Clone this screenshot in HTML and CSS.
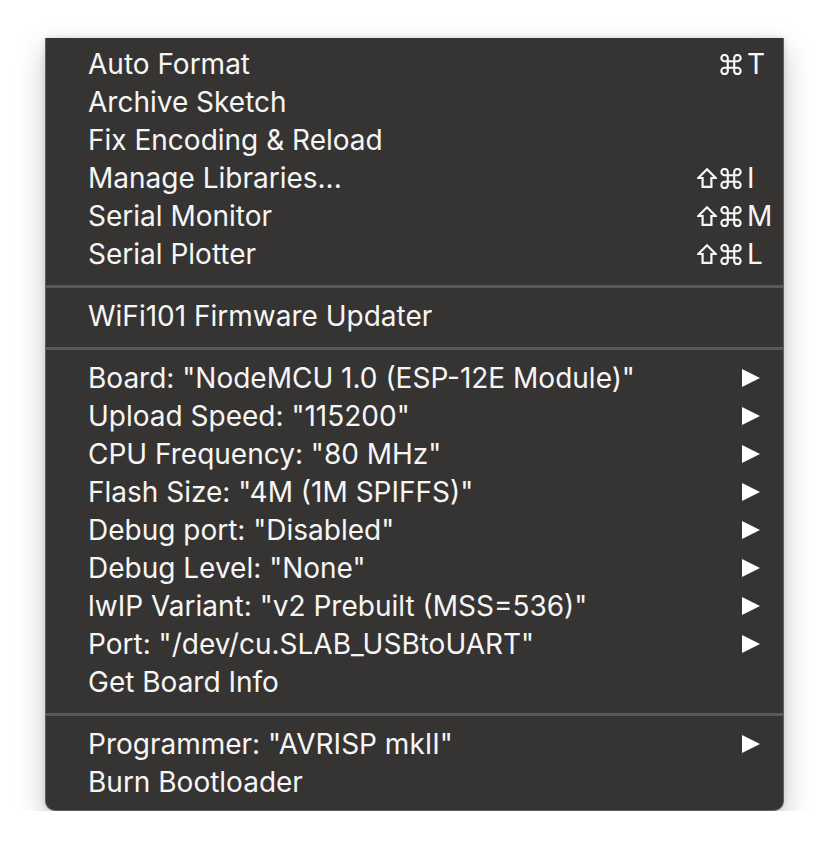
FILE: index.html
```html
<!DOCTYPE html>
<html>
<head>
<meta charset="utf-8">
<link rel="stylesheet" href="styles.css">
</head>
<body>
<div class="menu">
  <div class="row"><span class="label">Auto Format</span><span class="mods"><svg class="cmd" viewBox="2.2 2.2 19.6 19.6"><path d="M18 3a3 3 0 0 0-3 3v12a3 3 0 0 0 3 3 3 3 0 0 0 3-3 3 3 0 0 0-3-3H6a3 3 0 0 0-3 3 3 3 0 0 0 3 3 3 3 0 0 0 3-3V6a3 3 0 0 0-3-3 3 3 0 0 0-3 3 3 3 0 0 0 3 3h12a3 3 0 0 0 3-3 3 3 0 0 0-3-3z"/></svg></span><span class="key">T</span></div>
  <div class="row"><span class="label">Archive Sketch</span></div>
  <div class="row"><span class="label">Fix Encoding &amp; Reload</span></div>
  <div class="row"><span class="label">Manage Libraries...</span><span class="mods"><svg class="shift" viewBox="0 0 20 20"><polygon points="10,1.3 18.7,10 14.4,10 14.4,18.9 5.6,18.9 5.6,10 1.3,10"/></svg><svg class="cmd" viewBox="2.2 2.2 19.6 19.6"><path d="M18 3a3 3 0 0 0-3 3v12a3 3 0 0 0 3 3 3 3 0 0 0 3-3 3 3 0 0 0-3-3H6a3 3 0 0 0-3 3 3 3 0 0 0 3 3 3 3 0 0 0 3-3V6a3 3 0 0 0-3-3 3 3 0 0 0-3 3 3 3 0 0 0 3 3h12a3 3 0 0 0 3-3 3 3 0 0 0-3-3z"/></svg></span><span class="key">I</span></div>
  <div class="row"><span class="label">Serial Monitor</span><span class="mods"><svg class="shift" viewBox="0 0 20 20"><polygon points="10,1.3 18.7,10 14.4,10 14.4,18.9 5.6,18.9 5.6,10 1.3,10"/></svg><svg class="cmd" viewBox="2.2 2.2 19.6 19.6"><path d="M18 3a3 3 0 0 0-3 3v12a3 3 0 0 0 3 3 3 3 0 0 0 3-3 3 3 0 0 0-3-3H6a3 3 0 0 0-3 3 3 3 0 0 0 3 3 3 3 0 0 0 3-3V6a3 3 0 0 0-3-3 3 3 0 0 0-3 3 3 3 0 0 0 3 3h12a3 3 0 0 0 3-3 3 3 0 0 0-3-3z"/></svg></span><span class="key">M</span></div>
  <div class="row"><span class="label">Serial Plotter</span><span class="mods"><svg class="shift" viewBox="0 0 20 20"><polygon points="10,1.3 18.7,10 14.4,10 14.4,18.9 5.6,18.9 5.6,10 1.3,10"/></svg><svg class="cmd" viewBox="2.2 2.2 19.6 19.6"><path d="M18 3a3 3 0 0 0-3 3v12a3 3 0 0 0 3 3 3 3 0 0 0 3-3 3 3 0 0 0-3-3H6a3 3 0 0 0-3 3 3 3 0 0 0 3 3 3 3 0 0 0 3-3V6a3 3 0 0 0-3-3 3 3 0 0 0-3 3 3 3 0 0 0 3 3h12a3 3 0 0 0 3-3 3 3 0 0 0-3-3z"/></svg></span><span class="key">L</span></div>
  <div class="sep"></div>
  <div class="row"><span class="label">WiFi101 Firmware Updater</span></div>
  <div class="sep"></div>
  <div class="row"><span class="label">Board: "NodeMCU 1.0 (ESP-12E Module)"</span><span class="arrow"></span></div>
  <div class="row"><span class="label">Upload Speed: "115200"</span><span class="arrow"></span></div>
  <div class="row"><span class="label">CPU Frequency: "80 MHz"</span><span class="arrow"></span></div>
  <div class="row"><span class="label">Flash Size: "4M (1M SPIFFS)"</span><span class="arrow"></span></div>
  <div class="row"><span class="label">Debug port: "Disabled"</span><span class="arrow"></span></div>
  <div class="row"><span class="label">Debug Level: "None"</span><span class="arrow"></span></div>
  <div class="row"><span class="label">lwIP Variant: "v2 Prebuilt (MSS=536)"</span><span class="arrow"></span></div>
  <div class="row"><span class="label">Port: "/dev/cu.SLAB_USBtoUART"</span><span class="arrow"></span></div>
  <div class="row"><span class="label">Get Board Info</span></div>
  <div class="sep"></div>
  <div class="row"><span class="label">Programmer: "AVRISP mkII"</span><span class="arrow"></span></div>
  <div class="row"><span class="label">Burn Bootloader</span></div>
</div>
</body>
</html>
```
FILE: styles.css
```css
html, body {
  margin: 0;
  padding: 0;
  background: #ffffff;
}
.menu {
  margin: 38px 0 0 45px;
  width: 737px;
  background: #363432;
  border: 1px solid #62615f;
  border-top: none;
  border-radius: 0 0 10px 10px;
  box-shadow: 0 12px 30px rgba(0, 0, 0, 0.22), 0 0 6px rgba(0, 0, 0, 0.12);
  padding: 7px 0 9px 0;
  font-family: "Inter", "DejaVu Sans", sans-serif;
  font-size: 28px;
  color: #f6f6f6;
}
.row {
  display: grid;
  grid-template-columns: 1fr 70px 28px;
  height: 38px;
  line-height: 38px;
  padding: 0 8px 0 42px;
  white-space: nowrap;
}
.label {
  grid-column: 1;
}
.mods {
  grid-column: 2;
  justify-self: end;
  padding-right: 5px;
  display: flex;
  align-items: center;
  gap: 3px;
}
.shift {
  width: 20px;
  height: 20px;
  fill: none;
  stroke: #f6f6f6;
  stroke-width: 2.2;
  stroke-linejoin: miter;
}
.cmd {
  width: 22px;
  height: 21px;
  fill: none;
  stroke: #f6f6f6;
  stroke-width: 2;
}
.key {
  grid-column: 3;
}
.arrow {
  grid-column: 2 / 4;
  justify-self: end;
  align-self: center;
  margin-right: 15px;
  width: 0;
  height: 0;
  border-top: 9px solid transparent;
  border-bottom: 9px solid transparent;
  border-left: 18px solid #ffffff;
}
.sep {
  height: 3px;
  background: #5a5958;
  margin: 12px 0 9px 0;
}
```
